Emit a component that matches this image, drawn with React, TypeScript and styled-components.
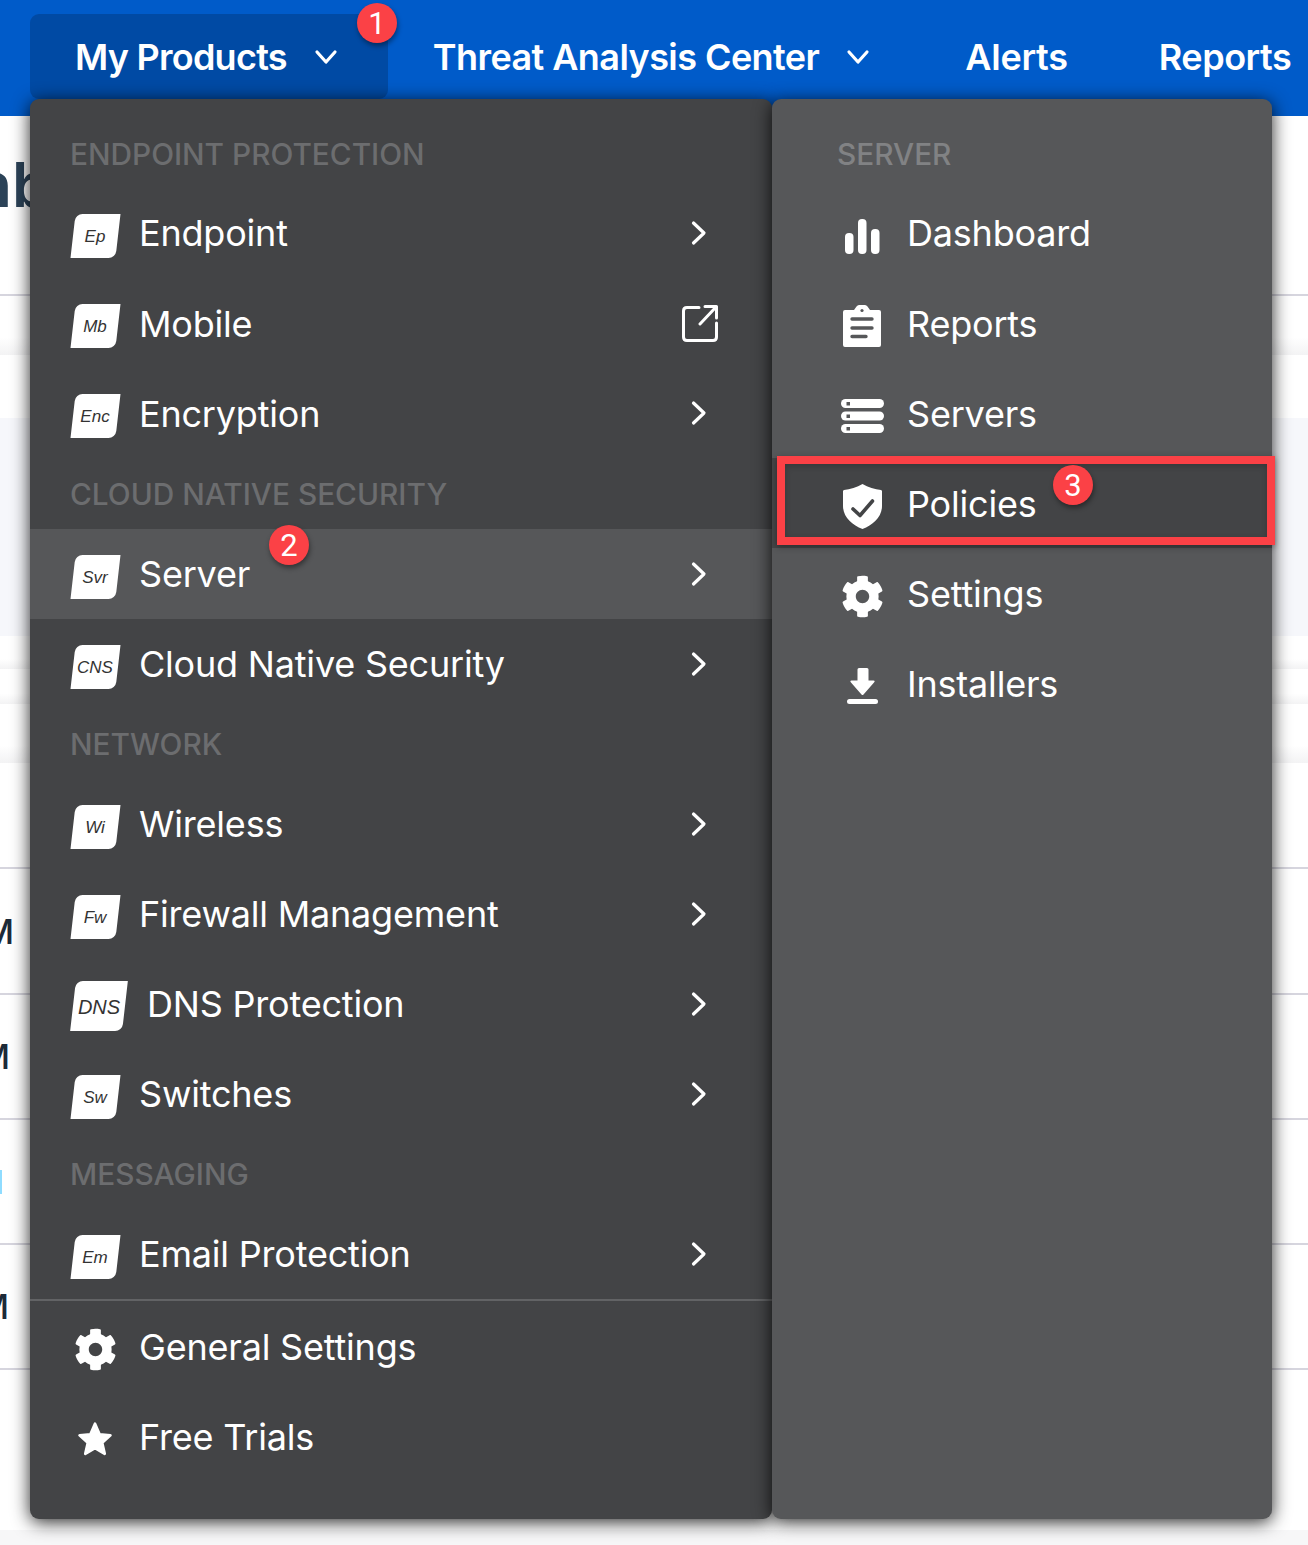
import React from "react";
import styled, { createGlobalStyle } from "styled-components";
import { FaCog } from "react-icons/fa";

const Global = createGlobalStyle`
  html, body { margin: 0; padding: 0; background: #fff; }
  body { font-family: Inter, "Noto Sans", Arial, sans-serif; width: 1308px; height: 1545px; overflow: hidden; }
  * { box-sizing: border-box; }
`;

const Page = styled.div`
  position: relative;
  width: 1308px;
  height: 1545px;
  overflow: hidden;
  background: #fff;
`;

const Nav = styled.nav`
  height: 116px;
  background: #005bc9;
  display: flex;
  align-items: flex-start;
  padding: 14px 0 0 30px;
  white-space: nowrap;
`;

const NavItem = styled.div<{ $active?: boolean; $track: number }>`
  position: relative;
  height: 85px;
  display: flex;
  align-items: center;
  padding: 0 46px 0 45px;
  border-radius: 9px;
  background: ${(p) => (p.$active ? "#004aa4" : "transparent")};
  color: #fff;
  font-size: 36px;
  font-weight: 600;
  letter-spacing: ${(p) => p.$track}px;
`;

const NavChevron = styled.svg`
  width: 32px;
  height: 32px;
  margin-left: 23px;
  flex: none;
`;

const TitleBlock = styled.div`
  height: 180px;
  border-bottom: 2px solid #d6d5de;
  display: flex;
  align-items: center;
  padding-bottom: 40px;
  overflow: hidden;
`;

const Title = styled.h1<{ $shift: number }>`
  margin: 0 0 0 ${(p) => p.$shift}px;
  font-size: 62px;
  line-height: 1;
  font-weight: 600;
  color: #2b4257;
`;

const Band = styled.div<{ $h: number; $bg?: string; $fade?: boolean }>`
  height: ${(p) => p.$h}px;
  background: ${(p) => p.$bg || "#fff"};
  ${(p) => (p.$fade ? "background: linear-gradient(#fff 70%, #f3f3f4 100%);" : "")}
`;

const TableRow = styled.div<{ $h: number }>`
  height: ${(p) => p.$h}px;
  border-bottom: 2px solid #d6d5de;
  display: flex;
  align-items: center;
  overflow: hidden;
`;

const TimeSuffix = styled.span<{ $shift: number }>`
  margin-left: ${(p) => p.$shift}px;
  font-size: 34px;
  font-weight: 500;
  color: #1d2a38;
`;

const LinkMark = styled.span`
  width: 2px;
  height: 24px;
  background: #8fdcff;
`;

const FooterStrip = styled.div`
  height: 15px;
  margin-top: 160px;
  background: #f7f7f8;
`;

const Dropdown = styled.div`
  position: absolute;
  left: 30px;
  top: 99px;
  display: grid;
  grid-template-columns: 742px 500px;
`;

const Panel = styled.div<{ $tone: string }>`
  position: relative;
  background: ${(p) => p.$tone};
  border-radius: 9px;
  padding: 18px 0 37px;
  box-shadow: 0 3px 18px rgba(0, 0, 0, 0.85);
`;

const GroupLabel = styled.div<{ $inset: number; $color: string; $h: number; $drop: number }>`
  height: ${(p) => p.$h}px;
  display: flex;
  align-items: center;
  padding-left: ${(p) => p.$inset}px;
  padding-top: ${(p) => p.$drop}px;
  font-size: 29.8px;
  font-weight: 500;
  color: ${(p) => p.$color};
`;

const Row = styled.div<{ $inset: number; $gap: number; $bg?: string }>`
  position: relative;
  height: 90px;
  display: flex;
  align-items: center;
  gap: ${(p) => p.$gap}px;
  padding-left: ${(p) => p.$inset}px;
  padding-right: 54px;
  color: #fff;
  font-size: 36px;
  background: ${(p) => p.$bg || "transparent"};
  white-space: nowrap;
`;

const Label = styled.span<{ $drop?: boolean }>`
  flex: 1;
  letter-spacing: -0.2px;
  padding-top: ${(p) => (p.$drop ? 2 : 0)}px;
`;

const IconSlot = styled.span<{ $drop: number }>`
  width: 50px;
  height: 50px;
  flex: none;
  margin-top: ${(p) => p.$drop}px;
  display: flex;
  align-items: center;
  justify-content: center;
  color: #fff;
`;

const TrailSlot = styled.span`
  width: 38px;
  flex: none;
  display: flex;
  align-items: center;
  justify-content: center;
`;

const Tile = styled.span<{ $large?: boolean }>`
  position: relative;
  flex: none;
  width: ${(p) => (p.$large ? 58 : 50)}px;
  height: ${(p) => (p.$large ? 50 : 44)}px;
  margin-top: ${(p) => (p.$large ? 4 : 6)}px;
  display: flex;
  align-items: center;
  justify-content: center;
  font-family: "Liberation Sans", Arial, sans-serif;
  font-style: italic;
  font-size: ${(p) => (p.$large ? 20 : 17)}px;
  color: #333;

  &::before {
    content: "";
    position: absolute;
    top: 0;
    bottom: 0;
    left: ${(p) => (p.$large ? 3 : 2.5)}px;
    right: ${(p) => (p.$large ? 3 : 2.5)}px;
    background: #fff;
    border-radius: 7px 0 7px 0;
    transform: skewX(-6.5deg);
  }
`;

const TileText = styled.span`
  position: relative;
  padding-top: 2px;
`;

const Divider = styled.div`
  height: 2px;
  margin-bottom: 1px;
  background: #626365;
`;

const Badge = styled.span<{ $left: number; $top: number }>`
  position: absolute;
  left: ${(p) => p.$left}px;
  top: ${(p) => p.$top}px;
  width: 40px;
  height: 40px;
  border-radius: 50%;
  background: #fb4146;
  color: #fff;
  font-size: 31px;
  font-weight: 400;
  letter-spacing: 0;
  font-family: "Roboto", Inter, sans-serif;
  display: flex;
  align-items: center;
  justify-content: center;
  box-shadow: 1px 3px 5px rgba(0, 0, 0, 0.4);
  z-index: 3;
`;

const Callout = styled.span`
  position: absolute;
  left: 5px;
  right: -3px;
  top: -2px;
  bottom: 3px;
  border: 8px solid #fb4146;
  box-shadow: 0 2px 6px rgba(0, 0, 0, 0.35), inset 0 2px 6px rgba(0, 0, 0, 0.2);
  pointer-events: none;
`;

const ChevronRight = () => (
  <svg width="18" height="26" viewBox="0 0 18 26" fill="none">
    <path d="M3.5 3 L14 13 L3.5 23" stroke="#fff" strokeWidth="3.2" strokeLinecap="round" strokeLinejoin="round" />
  </svg>
);

const ChevronDown = () => (
  <NavChevron viewBox="0 0 32 32" fill="none">
    <path d="M7 11 L16 21 L25 11" stroke="#fff" strokeWidth="3.2" strokeLinecap="round" strokeLinejoin="round" />
  </NavChevron>
);

const ExternalLink = () => (
  <svg width="38" height="38" viewBox="-1 0 38 38" fill="none" stroke="#fff" strokeWidth="3" strokeLinecap="round" strokeLinejoin="round">
    <path d="M18 3.5 H6 Q2.5 3.5 2.5 7 V33 Q2.5 36.5 6 36.5 H32 Q35.5 36.5 35.5 33 V19" />
    <path d="M19 20 L35 3 M24 2.5 H35.5 V14" />
  </svg>
);

const BarsIcon = () => (
  <svg width="35" height="35" viewBox="0 0 35 35" fill="#fff">
    <rect x="0" y="14" width="8.5" height="21" rx="4" />
    <rect x="13" y="0" width="8.5" height="35" rx="4" />
    <rect x="26" y="10" width="8.5" height="25" rx="4" />
  </svg>
);

const ClipboardIcon = ({ ink }: { ink: string }) => (
  <svg width="38" height="42" viewBox="0 0 38 42">
    <path d="M2 5 H11 L13.5 1.5 Q14.5 0 16 0 H22 Q23.5 0 24.5 1.5 L27 5 H36 Q38 5 38 7 V40 Q38 42 36 42 H2 Q0 42 0 40 V7 Q0 5 2 5 Z" fill="#fff" />
    <circle cx="19" cy="5.5" r="1.6" fill={ink} />
    <path d="M9 14 H29 M9 23 H29 M9 31.5 H23" stroke={ink} strokeWidth="3.4" strokeLinecap="round" fill="none" />
  </svg>
);

const ServersIcon = ({ ink }: { ink: string }) => (
  <svg width="43" height="34" viewBox="0 0 43 34">
    {[0, 12.5, 25].map((y) => (
      <g key={y}>
        <rect x="0" y={y} width="43" height="9" rx="4.5" fill="#fff" />
        <rect x="5.5" y={y + 3} width="3.5" height="3.5" fill={ink} />
      </g>
    ))}
  </svg>
);

const ShieldIcon = ({ ink }: { ink: string }) => (
  <svg width="39" height="45" viewBox="0 0 39 45">
    <path d="M19.5 0 C25 3.2 32 5.2 38 6 Q39 6.2 39 7.5 V22 C39 33 30 41 19.5 45 C9 41 0 33 0 22 V7.5 Q0 6.2 1 6 C7 5.2 14 3.2 19.5 0 Z" fill="#fff" />
    <path d="M10 25 L17 31.5 L29.5 17" stroke={ink} strokeWidth="3.6" fill="none" strokeLinecap="round" strokeLinejoin="round" />
  </svg>
);

const DownloadIcon = () => (
  <svg width="31" height="36" viewBox="0 0 31 36" fill="#fff">
    <path d="M10.5 1.5 Q10.5 0 12 0 H20 Q21.5 0 21.5 1.5 V12.5 H26.5 Q28.5 12.5 27 14.5 L16.5 26.5 Q15.5 27.5 14.5 26.5 L4 14.5 Q2.5 12.5 4.5 12.5 H10.5 Z" />
    <rect x="0" y="31" width="31" height="5" rx="2.5" />
  </svg>
);

const StarIcon = () => (
  <svg width="38" height="38" viewBox="0 0 36 36">
    <path
      d="M18 3.5 L22.3 13.6 L32.6 14.5 L24.8 21.6 L27.2 32 L18 26.5 L8.8 32 L11.2 21.6 L3.4 14.5 L13.7 13.6 Z"
      fill="#fff"
      stroke="#fff"
      strokeWidth="2.6"
      strokeLinejoin="round"
    />
  </svg>
);

type Product = { tile: string; name: string; ext?: boolean; large?: boolean; hot?: boolean; low?: boolean };
type Group = { title: string; h: number; drop: number; items: Product[] };

const groups: Group[] = [
  {
    title: "ENDPOINT PROTECTION",
    h: 71,
    drop: 2,
    items: [
      { tile: "Ep", name: "Endpoint" },
      { tile: "Mb", name: "Mobile", ext: true, low: true },
      { tile: "Enc", name: "Encryption", low: true },
    ],
  },
  {
    title: "CLOUD NATIVE SECURITY",
    h: 71,
    drop: 0,
    items: [
      { tile: "Svr", name: "Server", hot: true },
      { tile: "CNS", name: "Cloud Native Security" },
    ],
  },
  {
    title: "NETWORK",
    h: 70,
    drop: 0,
    items: [
      { tile: "Wi", name: "Wireless" },
      { tile: "Fw", name: "Firewall Management" },
      { tile: "DNS", name: "DNS Protection", large: true },
      { tile: "Sw", name: "Switches" },
    ],
  },
  { title: "MESSAGING", h: 70, drop: 0, items: [{ tile: "Em", name: "Email Protection" }] },
];

const DARK = "#434446";
const LIGHT = "#565759";

export default function App() {
  return (
    <Page>
      <Global />
      <Nav>
        <NavItem $active $track={-0.75}>
          My Products
          <ChevronDown />
          <Badge $left={327} $top={-11}>1</Badge>
        </NavItem>
        <NavItem $track={-0.57}>
          Threat Analysis Center
          <ChevronDown />
        </NavItem>
        <NavItem $track={-0.25}>Alerts</NavItem>
        <NavItem $track={-0.48}>Reports</NavItem>
      </Nav>

      <TitleBlock>
        <Title $shift={-26}>nb</Title>
      </TitleBlock>
      <Band $h={59} $fade />
      <Band $h={63} />
      <Band $h={218} $bg="#f6f7fb" />
      <Band $h={33} $fade />
      <Band $h={35} $fade />
      <Band $h={59} $fade />
      <TableRow $h={106} />
      <TableRow $h={126}>
        <TimeSuffix $shift={-17}>M</TimeSuffix>
      </TableRow>
      <TableRow $h={125}>
        <TimeSuffix $shift={-21}>M</TimeSuffix>
      </TableRow>
      <TableRow $h={125}>
        <LinkMark />
      </TableRow>
      <TableRow $h={125}>
        <TimeSuffix $shift={-22}>M</TimeSuffix>
      </TableRow>
      <FooterStrip />

      <Dropdown>
        <Panel $tone={DARK}>
          {groups.map((g) => (
            <React.Fragment key={g.title}>
              <GroupLabel $inset={40} $color="#6c6d6f" $h={g.h} $drop={g.drop}>{g.title}</GroupLabel>
              {g.items.map((it) => (
                <Row key={it.name} $inset={40} $gap={19} $bg={it.hot ? LIGHT : undefined}>
                  <Tile $large={it.large}>
                    <TileText>{it.tile}</TileText>
                  </Tile>
                  <Label $drop={it.low}>{it.name}</Label>
                  <TrailSlot>{it.ext ? <ExternalLink /> : <ChevronRight />}</TrailSlot>
                  {it.hot && <Badge $left={239} $top={-4}>2</Badge>}
                </Row>
              ))}
            </React.Fragment>
          ))}
          <Divider />
          <Row $inset={40} $gap={19}>
            <IconSlot $drop={4}><FaCog size={43} /></IconSlot>
            <Label>General Settings</Label>
          </Row>
          <Row $inset={40} $gap={19}>
            <IconSlot $drop={4}><StarIcon /></IconSlot>
            <Label>Free Trials</Label>
          </Row>
        </Panel>

        <Panel $tone={LIGHT}>
          <GroupLabel $inset={65} $color="#818284" $h={71} $drop={2}>SERVER</GroupLabel>
          <Row $inset={65} $gap={20}>
            <IconSlot $drop={6}><BarsIcon /></IconSlot>
            <Label>Dashboard</Label>
          </Row>
          <Row $inset={65} $gap={20}>
            <IconSlot $drop={6}><ClipboardIcon ink={LIGHT} /></IconSlot>
            <Label $drop>Reports</Label>
          </Row>
          <Row $inset={65} $gap={20}>
            <IconSlot $drop={6}><ServersIcon ink={LIGHT} /></IconSlot>
            <Label $drop>Servers</Label>
          </Row>
          <Row $inset={65} $gap={20} $bg={DARK}>
            <IconSlot $drop={6}><ShieldIcon ink={DARK} /></IconSlot>
            <Label $drop>Policies</Label>
            <Callout />
            <Badge $left={281} $top={7}>3</Badge>
          </Row>
          <Row $inset={65} $gap={20}>
            <IconSlot $drop={6}><FaCog size={43} /></IconSlot>
            <Label $drop>Settings</Label>
          </Row>
          <Row $inset={65} $gap={20}>
            <IconSlot $drop={6}><DownloadIcon /></IconSlot>
            <Label $drop>Installers</Label>
          </Row>
        </Panel>
      </Dropdown>
    </Page>
  );
}
